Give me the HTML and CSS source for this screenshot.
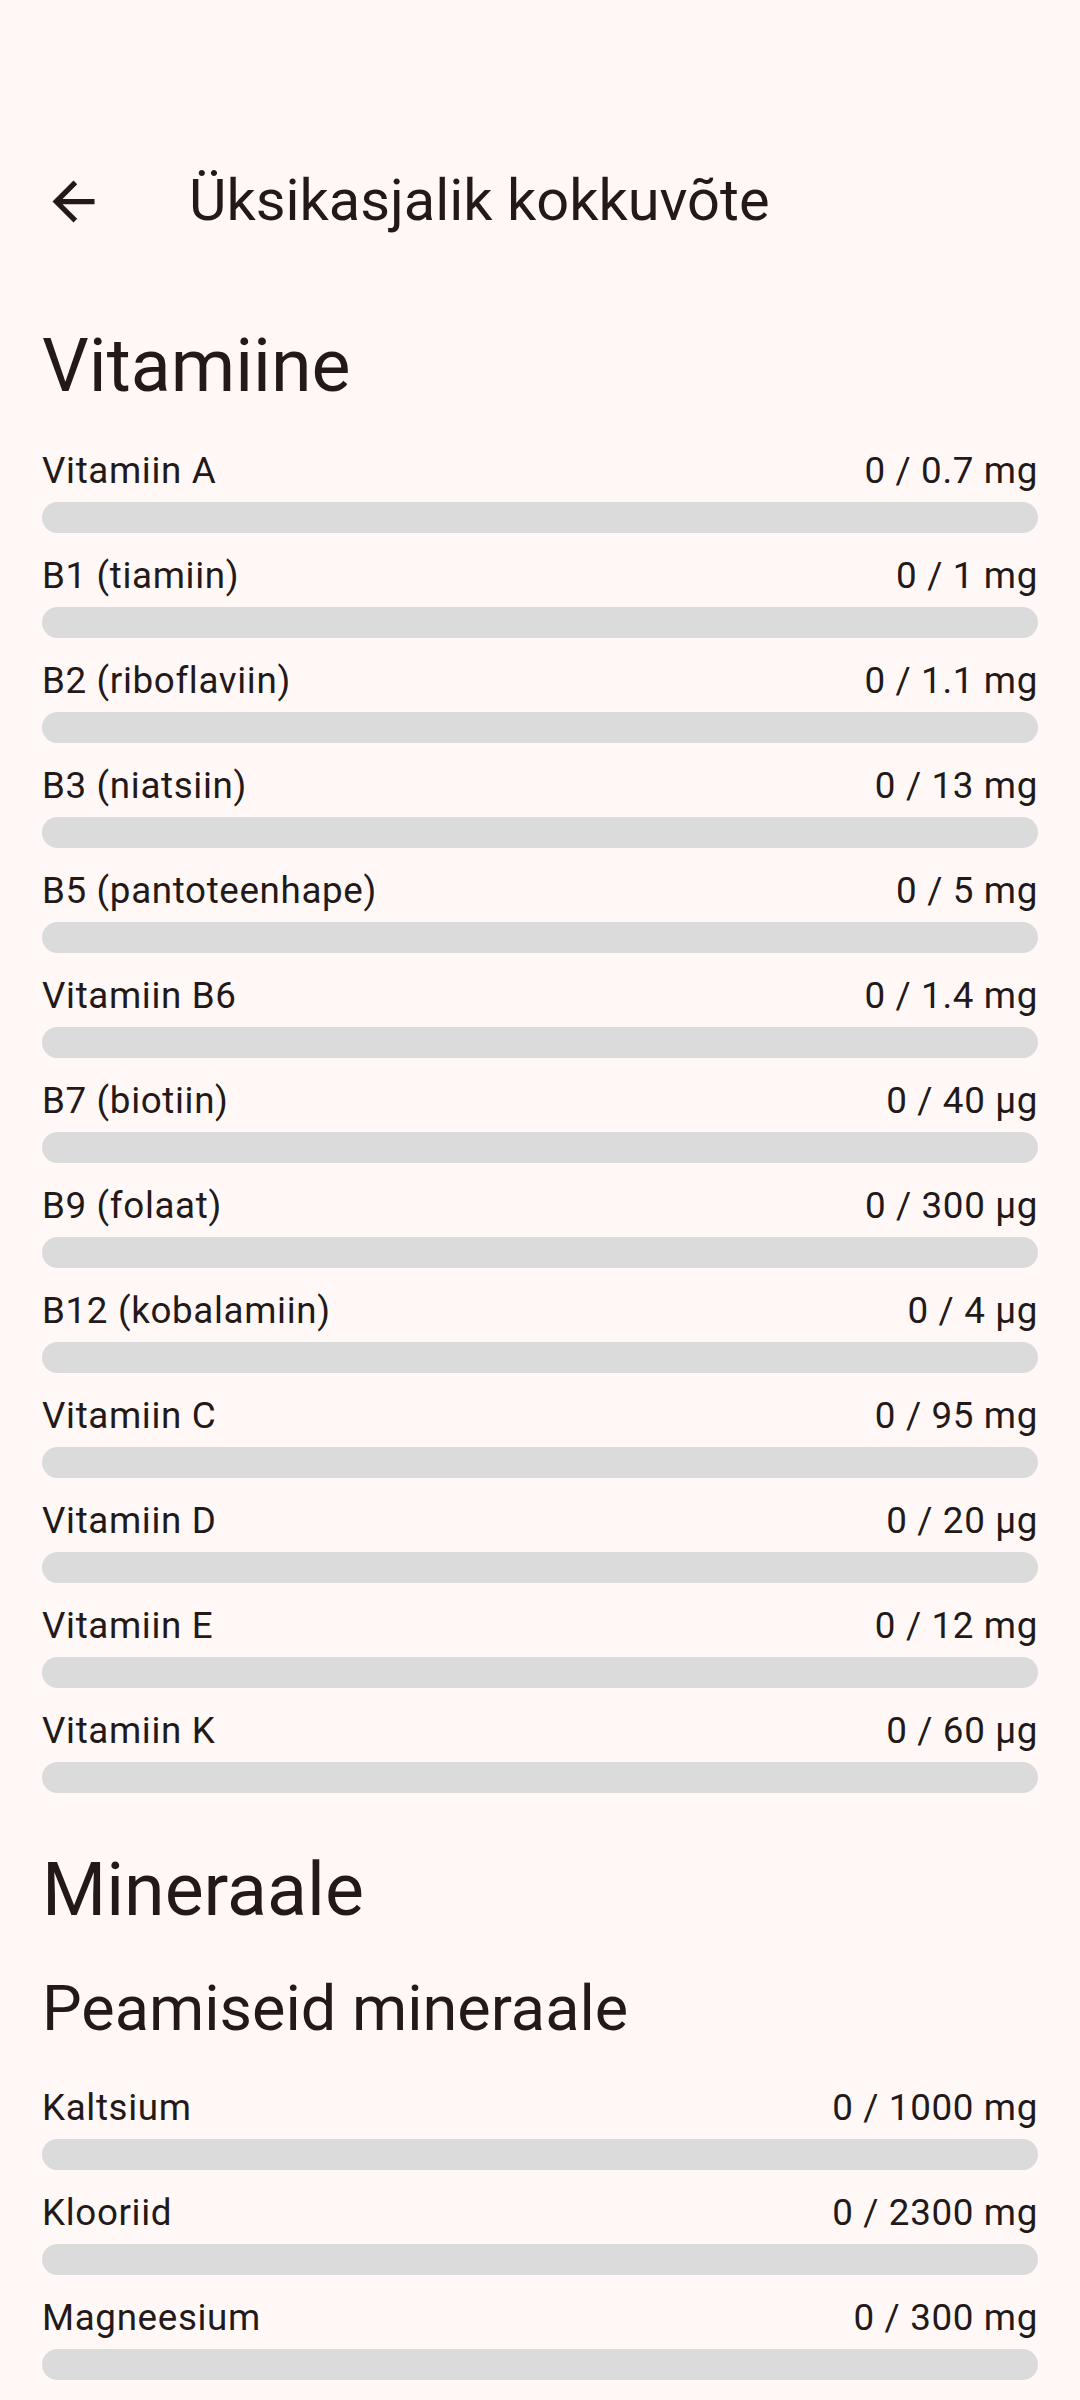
FILE: index.html
```html
<!DOCTYPE html>
<html lang="et">
<head>
    <meta charset="UTF-8">
    <meta name="viewport" content="width=device-width, initial-scale=1.0">
    <title>Üksikasjalik kokkuvõte</title>
    <link rel="stylesheet" href="styles.css">
</head>
<body>
    <div class="status-bar"></div>

    <header class="top-bar">
        <button class="icon-btn" aria-label="Tagasi">
            <svg viewBox="0 0 24 24" width="63" height="63">
                <path d="M20 11H7.83l5.59-5.59L12 4l-8 8 8 8 1.41-1.41L7.83 13H20v-2z" fill="#231918"/>
            </svg>
        </button>
        <h1 class="top-title">Üksikasjalik kokkuvõte</h1>
    </header>

    <main class="content">
        <h2 class="section-title">Vitamiine</h2>
        <div class="nutrient-list">
            <div class="nutrient">
                <div class="nutrient-row"><span>Vitamiin A</span><span>0 / 0.7 mg</span></div>
                <div class="track"></div>
            </div>
            <div class="nutrient">
                <div class="nutrient-row"><span>B1 (tiamiin)</span><span>0 / 1 mg</span></div>
                <div class="track"></div>
            </div>
            <div class="nutrient">
                <div class="nutrient-row"><span>B2 (riboflaviin)</span><span>0 / 1.1 mg</span></div>
                <div class="track"></div>
            </div>
            <div class="nutrient">
                <div class="nutrient-row"><span>B3 (niatsiin)</span><span>0 / 13 mg</span></div>
                <div class="track"></div>
            </div>
            <div class="nutrient">
                <div class="nutrient-row"><span>B5 (pantoteenhape)</span><span>0 / 5 mg</span></div>
                <div class="track"></div>
            </div>
            <div class="nutrient">
                <div class="nutrient-row"><span>Vitamiin B6</span><span>0 / 1.4 mg</span></div>
                <div class="track"></div>
            </div>
            <div class="nutrient">
                <div class="nutrient-row"><span>B7 (biotiin)</span><span>0 / 40 µg</span></div>
                <div class="track"></div>
            </div>
            <div class="nutrient">
                <div class="nutrient-row"><span>B9 (folaat)</span><span>0 / 300 µg</span></div>
                <div class="track"></div>
            </div>
            <div class="nutrient">
                <div class="nutrient-row"><span>B12 (kobalamiin)</span><span>0 / 4 µg</span></div>
                <div class="track"></div>
            </div>
            <div class="nutrient">
                <div class="nutrient-row"><span>Vitamiin C</span><span>0 / 95 mg</span></div>
                <div class="track"></div>
            </div>
            <div class="nutrient">
                <div class="nutrient-row"><span>Vitamiin D</span><span>0 / 20 µg</span></div>
                <div class="track"></div>
            </div>
            <div class="nutrient">
                <div class="nutrient-row"><span>Vitamiin E</span><span>0 / 12 mg</span></div>
                <div class="track"></div>
            </div>
            <div class="nutrient">
                <div class="nutrient-row"><span>Vitamiin K</span><span>0 / 60 µg</span></div>
                <div class="track"></div>
            </div>
        </div>

        <h2 class="section-title">Mineraale</h2>
        <h3 class="sub-title">Peamiseid mineraale</h3>
        <div class="nutrient-list">
            <div class="nutrient">
                <div class="nutrient-row"><span>Kaltsium</span><span>0 / 1000 mg</span></div>
                <div class="track"></div>
            </div>
            <div class="nutrient">
                <div class="nutrient-row"><span>Klooriid</span><span>0 / 2300 mg</span></div>
                <div class="track"></div>
            </div>
            <div class="nutrient">
                <div class="nutrient-row"><span>Magneesium</span><span>0 / 300 mg</span></div>
                <div class="track"></div>
            </div>
        </div>
    </main>
</body>
</html>
```

FILE: styles.css
```css
/* Global */
body {
    margin: 0;
    background: #fff8f7;
    color: #231918;
    font-family: Roboto, "Noto Sans", sans-serif;
    overflow: hidden;
}

.status-bar {
    height: 117px;
}

/* Top App Bar */
.top-bar {
    height: 168px;
    display: flex;
    align-items: center;
    padding-left: 10.5px;
}

.icon-btn {
    width: 126px;
    height: 126px;
    display: flex;
    align-items: center;
    justify-content: center;
    padding: 0;
    border: none;
    background: none;
}

.top-title {
    margin: 0 0 0 52.5px;
    font-size: 57.75px;
    line-height: 73.5px;
    font-weight: 400;
}

/* Content */
.content {
    padding: 0 42px;
}

.section-title {
    margin: 34px 0 30px;
    font-size: 73.5px;
    line-height: 94.5px;
    font-weight: 400;
}

.sub-title {
    margin: 0 0 30px;
    font-size: 63px;
    line-height: 84px;
    font-weight: 400;
}

.nutrient-list {
    display: flex;
    flex-direction: column;
    gap: 16px;
    padding-bottom: 16px;
}

.nutrient {
    display: flex;
    flex-direction: column;
    gap: 5px;
}

.nutrient-row {
    display: flex;
    justify-content: space-between;
    font-size: 36.75px;
    line-height: 53px;
    letter-spacing: 0.65px;
}

.track {
    height: 31px;
    border-radius: 15.5px;
    background: #dbdbdb;
}
```
